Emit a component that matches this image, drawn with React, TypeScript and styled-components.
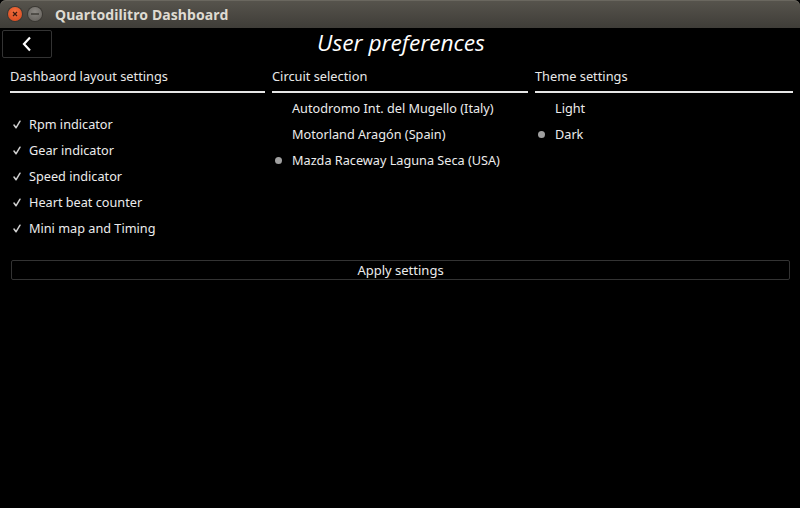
import React from "react";
import styled, { createGlobalStyle } from "styled-components";

const Global = createGlobalStyle`
  html, body { margin: 0; padding: 0; background: #000; }
  body { width: 800px; height: 508px; overflow: hidden; font-family: "Noto Sans", "Open Sans", sans-serif; }
`;

const Window = styled.div`
  width: 800px;
  height: 508px;
  background: #000;
  display: flex;
  flex-direction: column;
`;

const TitleBar = styled.div`
  height: 28px;
  flex: none;
  background: linear-gradient(#57544d, #3f3d38);
  border-radius: 6px 6px 0 0;
  display: flex;
  align-items: center;
  padding-left: 8px;
  gap: 6px;
  box-shadow: inset 0 1px 0 #6a675f;
`;

const WinButton = styled.div<{ $kind: "close" | "min" }>`
  width: 14px;
  height: 14px;
  border-radius: 50%;
  display: flex;
  align-items: center;
  justify-content: center;
  background: ${(p) =>
    p.$kind === "close"
      ? "radial-gradient(circle at 50% 35%, #f2703f, #d7461b)"
      : "radial-gradient(circle at 50% 35%, #8a8782, #5f5c57)"};
  box-shadow: 0 0 0 1px #3a3833;
`;

const WinTitle = styled.div`
  margin-left: 7px;
  color: #dfdbd2;
  font-family: "Noto Sans", "Open Sans", sans-serif;
  font-weight: 700;
  font-size: 14px;
  letter-spacing: 0.1px;
`;

const Header = styled.div`
  display: flex;
  align-items: center;
  height: 30px;
  padding: 1px 2px 0;
`;

const BackButton = styled.div`
  width: 50px;
  height: 28px;
  box-sizing: border-box;
  border: 1px solid #333;
  border-radius: 2px;
  display: flex;
  align-items: center;
  justify-content: center;
`;

const PageTitle = styled.div`
  flex: 1;
  text-align: center;
  color: #fff;
  font-style: italic;
  font-size: 22.7px;
  line-height: 28px;
  margin: -2px 48px 0 0;
  font-family: "Open Sans", "Noto Sans", sans-serif;
`;

const Columns = styled.div`
  display: grid;
  grid-template-columns: 255px 256px 258px;
  column-gap: 7px;
  padding: 8px 0 0 10px;
`;

const Column = styled.div`
  display: flex;
  flex-direction: column;
`;

const ColumnHeader = styled.div`
  color: #e8e8e8;
  font-size: 12.8px;
  line-height: 18px;
  padding-bottom: 6px;
  border-bottom: 2px solid #e6e6e6;
`;

const List = styled.div<{ $top: number }>`
  display: flex;
  flex-direction: column;
  padding-top: ${(p) => p.$top}px;
`;

const Item = styled.div`
  height: 26px;
  display: flex;
  align-items: center;
  color: #ececec;
  font-size: 12.7px;
`;

const Marker = styled.div<{ $w: number }>`
  width: ${(p) => p.$w}px;
  flex: none;
  display: flex;
  align-items: center;
  padding-left: 3px;
  box-sizing: border-box;
`;

const Dot = styled.div`
  width: 7px;
  height: 7px;
  border-radius: 50%;
  background: #a0a0a0;
`;

const ApplyButton = styled.div`
  margin: 19px 10px 0 11px;
  height: 20px;
  box-sizing: border-box;
  border: 1px solid #333;
  border-radius: 2px;
  display: flex;
  align-items: center;
  justify-content: center;
  color: #ececec;
  font-size: 13px;
`;

const Check = () => (
  <svg width="8" height="9" viewBox="0 0 8 9">
    <path d="M1 5 L3 7.8 L7 1.2" fill="none" stroke="#cfcfcf" strokeWidth="1.5" strokeLinecap="round" strokeLinejoin="round" />
  </svg>
);

const layoutItems = ["Rpm indicator", "Gear indicator", "Speed indicator", "Heart beat counter", "Mini map and Timing"];
const circuits = [
  { name: "Autodromo Int. del Mugello (Italy)", on: false },
  { name: "Motorland Aragón (Spain)", on: false },
  { name: "Mazda Raceway Laguna Seca (USA)", on: true },
];
const themes = [
  { name: "Light", on: false },
  { name: "Dark", on: true },
];

export default function App() {
  return (
    <Window>
      <Global />
      <TitleBar>
        <WinButton $kind="close">
          <svg width="6" height="6" viewBox="0 0 6 6">
            <path d="M1 1 L5 5 M5 1 L1 5" stroke="#3a1a10" strokeWidth="1.2" />
          </svg>
        </WinButton>
        <WinButton $kind="min">
          <svg width="8" height="2" viewBox="0 0 8 2">
            <path d="M0 1 H8" stroke="#3a3833" strokeWidth="1.4" />
          </svg>
        </WinButton>
        <WinTitle>Quartodilitro Dashboard</WinTitle>
      </TitleBar>
      <Header>
        <BackButton>
          <svg width="10" height="16" viewBox="0 0 10 16">
            <path d="M8 1.5 L2 8 L8 14.5" fill="none" stroke="#fff" strokeWidth="2.2" />
          </svg>
        </BackButton>
        <PageTitle>User preferences</PageTitle>
      </Header>
      <Columns>
        <Column>
          <ColumnHeader>Dashbaord layout settings</ColumnHeader>
          <List $top={18}>
            {layoutItems.map((t) => (
              <Item key={t}>
                <Marker $w={19}><Check /></Marker>
                {t}
              </Item>
            ))}
          </List>
        </Column>
        <Column>
          <ColumnHeader>Circuit selection</ColumnHeader>
          <List $top={2}>
            {circuits.map((c) => (
              <Item key={c.name}>
                <Marker $w={20}>{c.on && <Dot />}</Marker>
                {c.name}
              </Item>
            ))}
          </List>
        </Column>
        <Column>
          <ColumnHeader>Theme settings</ColumnHeader>
          <List $top={2}>
            {themes.map((c) => (
              <Item key={c.name}>
                <Marker $w={20}>{c.on && <Dot />}</Marker>
                {c.name}
              </Item>
            ))}
          </List>
        </Column>
      </Columns>
      <ApplyButton>Apply settings</ApplyButton>
    </Window>
  );
}
